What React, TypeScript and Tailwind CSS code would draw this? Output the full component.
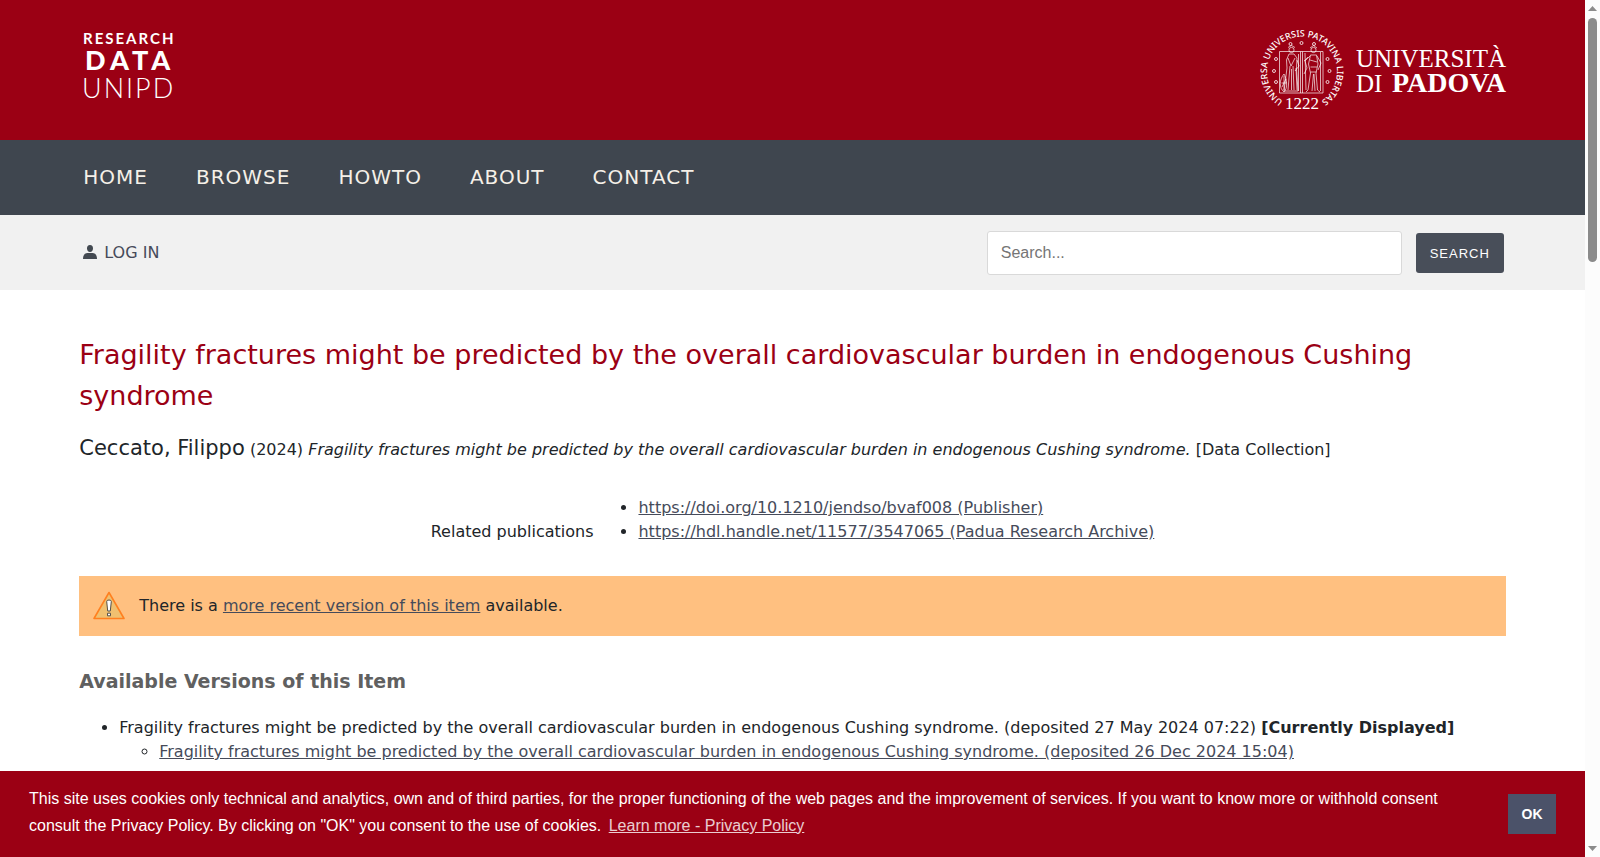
import React from "react";

const NAV_ITEMS = ["HOME", "BROWSE", "HOWTO", "ABOUT", "CONTACT"];

const TITLE =
  "Fragility fractures might be predicted by the overall cardiovascular burden in endogenous Cushing syndrome";

function ResearchDataLogo() {
  return (
    <svg
      className="h-[76px] w-[100px] overflow-visible fill-white font-[Lato,sans-serif]"
      viewBox="0 0 100 76"
      role="img"
      aria-label="Research Data Unipd"
    >
      <text x="0" y="14" className="text-[15px] font-bold tracking-[2px]">
        RESEARCH
      </text>
      <text x="2" y="40" className="text-[27px] font-black tracking-[5px]">
        DATA
      </text>
      <text x="-1" y="68" className="text-[27px] font-light tracking-[2px]">
        UNIPD
      </text>
    </svg>
  );
}

const STARS: [number, number][] = [
  [30.5, 14],
  [41.5, 13],
  [54, 14],
  [16, 29],
  [14, 41],
  [16, 52],
  [67.5, 29],
  [69.5, 41],
  [67.5, 52],
];

function UniversityLogo() {
  return (
    <svg
      className="h-[88px] w-[246px] overflow-visible fill-white"
      viewBox="0 0 246 88"
      role="img"
      aria-label="Università di Padova"
    >
      <defs>
        <path id="seal-arc" d="M23 71 A35 35 0 1 1 61 71" />
      </defs>
      <text className="font-['Noto_Sans',sans-serif] text-[9px] font-medium">
        <textPath href="#seal-arc">UNIVERSA UNIVERSIS PATAVINA LIBERTAS</textPath>
      </text>
      {STARS.map(([x, y]) => (
        <circle
          key={`${x}-${y}`}
          cx={x}
          cy={y}
          r="1.5"
          className="fill-none stroke-white/80 stroke-1"
        />
      ))}
      <g className="fill-none stroke-white/75 stroke-[0.9]">
        <path d="M19.500 21.500 H63 V63 H19.500 Z M40.500 21.500 V63 M42.500 21.500 V63" />
        <circle cx="31.500" cy="20" r="2.600" />
        <path d="M28 17.500 L31.500 15.500 L35 17.500" />
        <path d="M29 24 L26.500 30 L27 38 L24 61 H38 L36.500 38 L37 28 L34 24 Z" />
        <path d="M28 28 L31 36 L35 28 M30 36 L28 60 M33 36 L34 60 M31.500 39 V60 M36 38 L37 60" />
        <path d="M37 30 L39 36 L35 41 M38.500 24 V61" />
        <path d="M24 44 C19 50 19 58 24 62 C28 58 27 49 24 44 Z M24 46 V60 M21.500 53 H27 M22 57 L26 49" />
        <circle cx="53.500" cy="20" r="2.600" />
        <path d="M50 18 L53.500 15.500 L57 18" />
        <path d="M50.500 25 L48.500 34 L50.500 43 L48 60 L46 62 M56.500 25 L58 34 L56 43 L57.500 60 L60 62" />
        <path d="M50.500 25 H56.500 M50 30 L57 32 M50.500 37 H57 M50.500 42 H56.500 M53.500 44 L52 61 M54 44 L55 61" />
        <path d="M50 26 L45 31 L47 38 L44 44 M57 26 L61 33 L58 40 M45 23 L46 60 M60.500 22 V61 M44 31 L48 27" />
      </g>
      <text x="25" y="79" className="font-['Liberation_Serif',serif] text-[17px]">
        1222
      </text>
      <text x="96" y="37" className="font-['Liberation_Serif',serif] text-[25px]">
        UNIVERSITÀ
      </text>
      <text x="96" y="62" className="font-['Liberation_Serif',serif] text-[25px]">
        DI
      </text>
      <text x="132" y="62" className="font-['Liberation_Serif',serif] text-[28px] font-bold">
        PADOVA
      </text>
    </svg>
  );
}

function PersonIcon() {
  return (
    <svg
      className="mb-0.5 h-[14px] w-[14px] fill-[#434951]"
      viewBox="0 0 14 14"
      aria-hidden="true"
    >
      <path d="M7 0 C4.900 0 4 1.300 4 3.200 C4 5.400 5.200 7 7 7 S10 5.400 10 3.200 C10 1.300 9.100 0 7 0 Z" />
      <path d="M4.500 8 H9.500 C12.500 8 14 10.500 14 14 H0 C0 10.500 1.500 8 4.500 8 Z" />
    </svg>
  );
}

function WarningIcon() {
  return (
    <svg className="h-8 w-8" viewBox="0 0 32 32" aria-hidden="true">
      <path
        d="M16 2.500 L31 28.500 H1 Z"
        className="fill-[#f0c070] stroke-[#ff8020] stroke-[1.6]"
        strokeLinejoin="round"
      />
      <path
        d="M13.700 11.500 Q13.700 10 16 10 Q18.300 10 18.300 11.500 L17.300 21 H14.700 Z M14.500 23.200 H17.500 V25.800 H14.500 Z"
        className="fill-white stroke-[#55504a] stroke-1"
      />
    </svg>
  );
}

function Scrollbar() {
  return (
    <div
      className="fixed inset-y-0 right-0 flex w-[15px] flex-col items-center justify-between bg-[#fcfcfc] py-1.5"
      aria-hidden="true"
    >
      <div className="flex w-full flex-col items-center gap-[7px]">
        <svg className="h-[5px] w-[9px] fill-[#8b8b8b]" viewBox="0 0 9 5">
          <path d="M4.500 0 L9 5 H0 Z" />
        </svg>
        <div className="h-[244px] w-[9px] rounded-full bg-[#8b8b8b]" />
      </div>
      <svg className="h-[5px] w-[9px] fill-[#8b8b8b]" viewBox="0 0 9 5">
        <path d="M0 0 H9 L4.500 5 Z" />
      </svg>
    </div>
  );
}

export default function App() {
  return (
    <div className="min-h-screen bg-white pr-[15px] font-['DejaVu_Sans',sans-serif] text-base text-[#212529]">
      <header className="flex h-[140px] items-start justify-between bg-[#9b0014] px-[5%] pt-[30px]">
        <a href="#home" className="ml-1">
          <ResearchDataLogo />
        </a>
        <a href="#unipd">
          <UniversityLogo />
        </a>
      </header>

      <nav className="flex h-[75px] items-center bg-[#3f464f] px-[5%] pb-0.5">
        <ul className="ml-1 flex gap-12 text-[20px] leading-6 tracking-[1px] text-[#f5f0e8]">
          {NAV_ITEMS.map((item) => (
            <li key={item}>
              <a href={`#${item.toLowerCase()}`}>{item}</a>
            </li>
          ))}
        </ul>
      </nav>

      <div className="flex h-[75px] items-center justify-between bg-[#f1f1f1] px-[5%]">
        <a href="#login" className="ml-1 flex items-center gap-[7px] text-[#464b5a]">
          <PersonIcon />
          LOG IN
        </a>
        <form className="mr-0.5 flex items-center gap-3.5" onSubmit={(e) => e.preventDefault()}>
          <input
            type="text"
            aria-label="Search"
            placeholder="Search..."
            className="h-11 w-[415px] rounded-[3px] border border-[#d9d9d9] bg-white px-[13px] font-['Liberation_Sans',sans-serif] placeholder:text-[#757575]"
          />
          <button
            type="submit"
            className="h-10 w-[88px] rounded-[3px] bg-[#484e59] pt-0.5 font-['Liberation_Sans',sans-serif] text-[13px] tracking-[1px] text-white"
          >
            SEARCH
          </button>
        </form>
      </div>

      <main className="px-[5%] pb-28 pt-11">
        <h1 className="text-[27px] leading-[41px] text-[#9b0014]">{TITLE}</h1>

        <p className="mt-4 leading-8">
          <span className="text-[21px]">Ceccato, Filippo</span> (2024) <em>{TITLE}.</em> [Data
          Collection]
        </p>

        <table className="mx-auto mt-[30px] leading-6">
          <tbody>
            <tr>
              <th scope="row" className="pr-[5px] align-bottom font-normal">
                Related publications
              </th>
              <td>
                <ul className="list-disc pl-10 text-[#464b5a] marker:text-[#212529]">
                  <li>
                    <a href="https://doi.org/10.1210/jendso/bvaf008" className="underline">
                      https://doi.org/10.1210/jendso/bvaf008 (Publisher)
                    </a>
                  </li>
                  <li>
                    <a href="https://hdl.handle.net/11577/3547065" className="underline">
                      https://hdl.handle.net/11577/3547065 (Padua Research Archive)
                    </a>
                  </li>
                </ul>
              </td>
            </tr>
          </tbody>
        </table>

        <div className="mt-8 flex min-h-[60px] items-center gap-3.5 bg-[#ffc080] px-3.5">
          <WarningIcon />
          <p>
            There is a{" "}
            <a href="#latest" className="text-[#464b5a] underline">
              more recent version of this item
            </a>{" "}
            available.
          </p>
        </div>

        <h2 className="mt-[30px] text-[19px] font-bold leading-[30px] text-[#606060]">
          Available Versions of this Item
        </h2>

        <ul className="mt-5 list-disc pl-10 leading-6">
          <li>
            {TITLE}. (deposited 27 May 2024 07:22) <strong>[Currently Displayed]</strong>
            <ul className="list-[circle] pl-10">
              <li>
                <a href="#december" className="text-[#464b5a] underline">
                  {TITLE}. (deposited 26 Dec 2024 15:04)
                </a>
              </li>
            </ul>
          </li>
        </ul>
      </main>

      <section
        aria-label="Cookie consent"
        className="fixed bottom-0 left-0 right-[15px] flex items-center bg-[#9b0014] px-[29px] py-[14px] font-['Liberation_Sans',sans-serif] leading-[27px] text-white"
      >
        <p className="mr-4 flex-1 pb-1">
          This site uses cookies only technical and analytics, own and of third parties, for the
          proper functioning of the web pages and the improvement of services. If you want to know
          more or withhold consent consult the Privacy Policy. By clicking on "OK" you consent to
          the use of cookies.{" "}
          <a href="#privacy" className="inline-block px-[3px] underline opacity-80">
            Learn more - Privacy Policy
          </a>
        </p>
        <button type="button" className="h-10 w-12 bg-[#4b5269] text-[14px] font-bold text-white">
          OK
        </button>
      </section>

      <Scrollbar />
    </div>
  );
}
